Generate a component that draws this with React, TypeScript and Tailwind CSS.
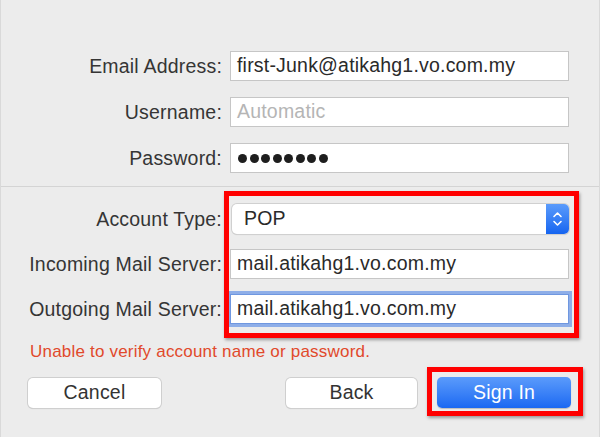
import React from "react";

const Label = ({ children }: { children: React.ReactNode }) => (
  <div className="w-[221px] shrink-0 text-right text-[19.5px] tracking-[0.2px] leading-[22px] text-[#353535]">{children}</div>
);

const Field = ({ children, focus = false }: { children?: React.ReactNode; focus?: boolean }) => (
  <div
    className={
      focus
        ? "ml-[8px] w-[339px] h-[30px] bg-white border border-[#6f97e0] ring-[3px] ring-[#8eaee8] flex items-center pl-[6px] text-[19.5px] tracking-[0.2px] text-[#2a2a2a]"
        : "ml-[8px] w-[339px] h-[30px] bg-white border border-[#c6c6c6] flex items-center pl-[6px] text-[19.5px] tracking-[0.2px] text-[#2a2a2a]"
    }
  >
    {children}
  </div>
);

export default function App() {
  return (
    <div className="relative w-[600px] h-[437px] overflow-hidden bg-[#ececec] border-x border-[#d9d9d9] font-['Liberation_Sans',Arial,sans-serif]">
      <div className="pt-[51px] flex flex-col gap-[16px]">
        <div className="flex items-center">
          <Label>Email Address:</Label>
          <Field>first-Junk@atikahg1.vo.com.my</Field>
        </div>
        <div className="flex items-center">
          <Label>Username:</Label>
          <Field>
            <span className="text-[#b5b5b5]">Automatic</span>
          </Field>
        </div>
        <div className="flex items-center">
          <Label>Password:</Label>
          <Field>
            <div className="flex gap-[2.5px] pl-[1px]">
              {Array.from({ length: 8 }).map((_, i) => (
                <span key={i} className="w-[9px] h-[9px] rounded-full bg-[#1e1e1e]" />
              ))}
            </div>
          </Field>
        </div>
      </div>

      <div className="mt-[13px] h-px bg-[#d4d4d4]" />

      <div className="pt-[17px] flex flex-col gap-[15px]">
        <div className="flex items-center">
          <Label>Account Type:</Label>
          <div className="ml-[10px] w-[337px] h-[30px] bg-white rounded-[5px] shadow-[0_0_0_1px_#d0d0d0,0_1px_1px_rgba(0,0,0,0.15)] flex items-center">
            <span className="flex-1 pl-[12px] text-[19.5px] tracking-[0.2px] text-[#2a2a2a]">POP</span>
            <div className="w-[23px] h-full rounded-r-[5px] bg-gradient-to-b from-[#5a9bfb] to-[#1464f0] flex items-center justify-center">
              <svg width="11" height="18" viewBox="0 0 11 18" fill="none" stroke="white" strokeWidth="1.6" strokeLinecap="round" strokeLinejoin="round">
                <path d="M2 6.5 L5.5 3 L9 6.5" />
                <path d="M2 11.5 L5.5 15 L9 11.5" />
              </svg>
            </div>
          </div>
        </div>
        <div className="flex items-center">
          <Label>Incoming Mail Server:</Label>
          <Field>mail.atikahg1.vo.com.my</Field>
        </div>
        <div className="flex items-center">
          <Label>Outgoing Mail Server:</Label>
          <Field focus>mail.atikahg1.vo.com.my</Field>
        </div>
      </div>

      <div className="mt-[18px] pl-[29px] text-[17px] tracking-[0.2px] leading-[20px] text-[#e1492b]">
        Unable to verify account name or password.
      </div>

      <div className="mt-[15px] flex items-center">
        <button className="ml-[27px] w-[133px] h-[30px] bg-white rounded-[5px] shadow-[0_0_0_1px_#cfcfcf,0_1px_1px_rgba(0,0,0,0.18)] text-[19.5px] tracking-[0.2px] text-[#333]">
          Cancel
        </button>
        <button className="ml-[125px] w-[131px] h-[30px] bg-white rounded-[5px] shadow-[0_0_0_1px_#cfcfcf,0_1px_1px_rgba(0,0,0,0.18)] text-[19.5px] tracking-[0.2px] text-[#333]">
          Back
        </button>
        <button className="ml-[20px] w-[134px] h-[31px] rounded-[5px] bg-gradient-to-b from-[#5b9bfb] to-[#1a68f2] shadow-[0_1px_1px_rgba(0,0,0,0.2)] text-[19.5px] tracking-[0.2px] text-white">
          Sign In
        </button>
      </div>

      <div className="absolute left-[223px] top-[191px] w-[355px] h-[147px] border-[5px] border-[#ff0000] shadow-[1px_2px_3px_rgba(0,0,0,0.35)]" />
      <div className="absolute left-[426px] top-[367px] w-[156px] h-[49px] border-[5px] border-[#ff0000] shadow-[1px_2px_3px_rgba(0,0,0,0.35)]" />
    </div>
  );
}
